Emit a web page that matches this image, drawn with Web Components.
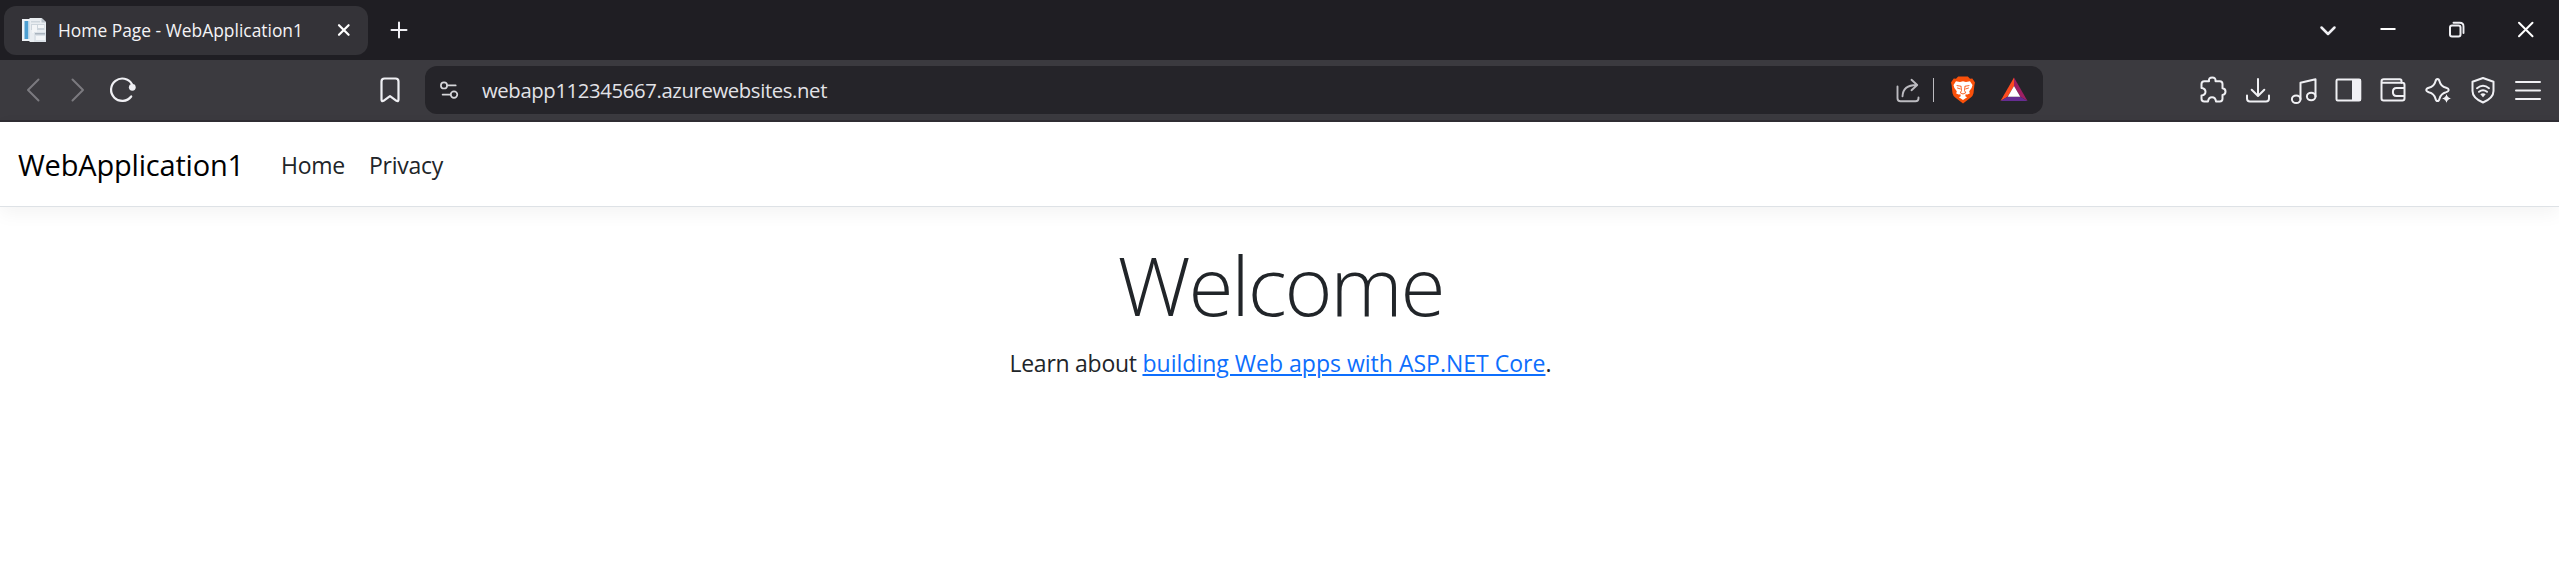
<!DOCTYPE html>
<html lang="en"><head><meta charset="utf-8"><title>Home Page - WebApplication1</title>
<style>
html,body{margin:0;height:100%;overflow:hidden;background:#fff;font-family:"Open Sans","Noto Sans",sans-serif}
</style></head><body>
<app-window></app-window>
<script>
const define=(name,html,init)=>customElements.define(name,class extends HTMLElement{
  constructor(){super();this.attachShadow({mode:'open'});}
  connectedCallback(){this.shadowRoot.innerHTML=typeof html==='function'?html(this):html;if(init)init(this);}
});

// Text whose tracking is adjusted so that it takes up the given width.
define('fit-text','<style>:host{display:inline-block;white-space:pre}span{display:inline-block}</style><span><slot></slot></span>',el=>{
  const s=el.shadowRoot.querySelector('span'),w=+el.getAttribute('width');
  s.style.letterSpacing=(w-s.getBoundingClientRect().width)/el.textContent.length+'px';
});

const ICONS={
 back:'<path d="M21.5 5.5 11 16 21.5 26.5" stroke="#7b7a7f"/>',
 forward:'<path d="M10.5 5.5 21 16 10.5 26.5" stroke="#7b7a7f"/>',
 reload:'<path d="M24.2 22.5A11.2 11.2 0 1 1 25 10.2" stroke-width="2.2"/><circle cx="25.3" cy="13.3" r="3.4" fill="#f0f0f4" stroke="none"/>',
 bookmark:'<path d="M7.5 7.5q0-3 3-3h11q3 0 3 3v18q0 2.4-2 1.3L16 22.2l-6.500 4.600q-2 1.100-2-1.300z" stroke-width="2.200"/>',
 tune:'<g stroke="#d6d6da" stroke-width="1.700"><circle cx="11" cy="11.400" r="3.100"/><path d="M14.300 11.400h8.400M9.600 20.600h8"/><circle cx="21" cy="20.600" r="3.300"/></g>',
 share:'<g stroke="#bcbbc0" stroke-width="1.900"><path d="M5.500 12.500v11.700q0 3 3 3h15q3 0 3-3v-.700M10.500 22.300q.500-11.300 14-11.300M19.500 5.800l5.700 5.200-5.700 5.200"/></g>',
 brave:'<path d="M11.200 2.500h9.600l2.200 2.200 2.300-.300 2.700 4.200-.600 2.300-.900 8.300q-.500 2.500-2.700 4.300L16 29.500l-7.800-6q-2.200-1.800-2.700-4.300l-.900-8.300L4 8.600l2.700-4.200 2.300.300z" fill="#f9500a" stroke="none"/><path d="M9 7.300l4 .600 3-.700 3 .700 4-.600 2.500 3.800-.900 3-2.400 3.200.600 2.300-2.500.800-1.700-.200-.300 2.100 1.800.900L16 26l-4.100-2.800 1.800-.900-.300-2.100-1.700.200-2.500-.800.600-2.300-2.400-3.200-.900-3z" fill="#fff" stroke="none"/><path d="M10 11.600l3.800.600M22 11.600l-3.800.600M14 12.500l.500 4-1.200 2.300 2.700 1.200 2.700-1.200-1.200-2.300.500-4M10.500 14l2.700.900M21.500 14l-2.700.900" stroke="#f9500a" stroke-width=".900"/>',
 bat:'<g stroke="none"><path d="M16 3.500 2.500 27 9.500 22.800 16 12z" fill="#ff4c20"/><path d="M16 3.500 29.500 27 22.500 22.800 16 12z" fill="#9e1f63"/><path d="M2.500 27h27l-7-4.300h-13z" fill="#662d91"/><path d="M16 12 9.700 22.700h12.600z" fill="#fff"/></g>',
 puzzle:'<path d="M4.500 10q0-2.800 2.800-2.800h4.700q-.500-3.700 3.200-3.700t3.300 3.700h4.300q2.700 0 2.700 2.800v4.200q3 .300 3 3.400t-3 3.500v3.700q0 2.700-2.700 2.700h-3.800q-.500-4.300-4-4.300t-4 4.300H7.300q-2.800 0-2.800-2.800v-3.200q4-.600 4-3.800t-4-3.800z"/>',
 download:'<path d="M16 5v16.500M9.700 15.800l6.300 6.200 6.300-6.200M5 21.500v3q0 3 3 3h16q3 0 3-3v-3"/>',
 music:'<ellipse cx="9.200" cy="25.200" rx="4.300" ry="3.800"/><ellipse cx="24.200" cy="22.500" rx="4.300" ry="3.800"/><path d="M13.500 25V8.700L28.500 5.200v17.300"/>',
 sidebar:'<rect x="4.500" y="5.500" width="23.800" height="21" rx="1.200"/><path d="M21 6h7v20h-7z" fill="#f0f0f4"/>',
 wallet:'<path d="M24.500 9V7q0-1.700-1.700-1.700H6.800Q4.500 5.300 4.500 7.500v16.800q0 2.200 2.200 2.200h18.600q2.200 0 2.200-2.200V11q0-2.200-2.200-2.200H6.500q-2 0-2-1.500M27.500 14h-8q-3.600 0-3.600 4t3.600 4h8"/>',
 sparkle:'<path d="M15.500 5q1.500 0 2 2.300 1.200 5 6.700 6.500 2.500.800 2.500 2.200t-2.500 2.200q-5.500 1.500-6.700 6.500-.500 2.300-2 2.300t-2-2.300q-1.200-5-6.700-6.500Q4.300 17.400 4.300 16t2.500-2.200q5.500-1.500 6.700-6.500Q14 5 15.500 5z"/><path d="M24.500 19.500q.800 4 5 5-4.200 1-5 5-.800-4-5-5 4.200-1 5-5z" fill="#f0f0f4" stroke="#3b3a3f" stroke-width=".800"/>',
 shield:'<path d="M16 4 26.500 7.800V17q0 7-10.500 11.500Q5.500 24 5.500 17V7.800z"/><path d="M10 14.200q6-4.800 12 0M12 17.800q4-3.200 8 0"/><path d="M13.300 20.300q2.700-2.200 5.400 0L16 23.200z" fill="#f0f0f4" stroke="none"/>',
 menu:'<path d="M4 8h24M4 16.500h24M4 25h24"/>',
 x:'<path d="M11 11.200l9.600 9.600M20.600 11.200 11 20.800" stroke="#fff" stroke-width="2.200"/>',
 plus:'<path d="M8.500 16h15M16 8.500v15"/>',
 caret:'<path d="M9.500 13.500l6.500 6.500 6.500-6.500" stroke-width="2.500"/>',
 min:'<path d="M8.500 15h15" stroke="#fff" stroke-linecap="butt"/>',
 restore:'<rect x="9" y="11.500" width="10.500" height="11" rx="2"/><path d="M12.500 8.800h6.300q3.700 0 3.700 3.700v6.500" stroke-width="1.900"/>',
 close:'<path d="M9 8.700l13.500 13.500M22.500 8.700 9 22.200" stroke="#fff"/>',
 page:'<g stroke="none"><path d="M4 5h16v22H4z" fill="#eef2f6"/><path d="M6.500 7h4v18h-4z" fill="#4c9fd2"/><path d="M10 7h2v18h-2z" fill="#b9d6ea"/><path d="M11.500 4h12.200l4.300 4v20H11.500z" fill="#e9edf1"/><path d="M23.500 4v4.500H28z" fill="#b8c0c8"/><path d="M13 7h9v1.500h-9zM13 10h13.500v6H13z" fill="#cdd5dc"/><path d="M14 11h5v8h-5zM20 11h6v3h-6z" fill="#f3f5f7"/><path d="M16 18h12v10H16z" fill="#dce2e8"/><path d="M17 19h10v1.500H17z" fill="#aab4be"/><path d="M18 22h9v4h-9z" fill="#f3f5f7"/></g>'
};
define('ui-icon',el=>`<style>:host{display:block;width:32px;height:32px;flex:none}svg{display:block}</style><svg width="32" height="32" viewBox="0 0 32 32" fill="none" stroke="#f0f0f4" stroke-width="2" stroke-linecap="round" stroke-linejoin="round">${ICONS[el.getAttribute('name')]}</svg>`);

define('tab-strip',`<style>
:host{display:flex;height:60px;background:#1f1e23;align-items:center;padding-left:4px;box-sizing:border-box}
.tab{display:flex;align-items:center;width:364px;height:49px;background:#343338;border-radius:12px;padding:0 8.500px 0 14px;box-sizing:border-box;color:#f4f4f6;font-size:17.400px;line-height:24px}
fit-text{margin-left:8px;flex:1}
.plus{margin-left:15px}
.win{display:flex;margin-left:auto;padding-right:17px}
.win :nth-child(2){margin-left:28px}.win :nth-child(3){margin-left:37px}.win :nth-child(4){margin-left:37px}
</style>
<div class="tab"><ui-icon name="page"></ui-icon><fit-text width="245">Home Page - WebApplication1</fit-text><ui-icon name="x"></ui-icon></div>
<ui-icon class="plus" name="plus"></ui-icon>
<div class="win"><ui-icon name="caret"></ui-icon><ui-icon name="min"></ui-icon><ui-icon name="restore"></ui-icon><ui-icon name="close"></ui-icon></div>`);

define('address-bar',`<style>
:host{display:flex;align-items:center;box-sizing:border-box;width:1618px;height:48px;border-radius:12px;background:#252429;padding:0 13.500px 0 8px;color:#e2e2e7;font-size:20.300px;line-height:28px}
fit-text{margin-left:17px;flex:1}
i{width:1px;height:24px;background:#bcbbc0;margin:0 13.500px 0 8.500px}
.bat{margin-left:18.500px}
</style><ui-icon name="tune"></ui-icon><fit-text width="345">webapp112345667.azurewebsites.net</fit-text><ui-icon name="share"></ui-icon><i></i><ui-icon name="brave"></ui-icon><ui-icon class="bat" name="bat"></ui-icon>`);

define('tool-bar',`<style>
:host{display:flex;align-items:center;box-sizing:border-box;height:62px;background:#3b3a3f;border-bottom:2px solid #302e34;padding:0 15px 0 17px}
.nav,.ext{display:flex;gap:13px}.mark{margin-left:235px}address-bar{margin-left:19px}.ext{margin-left:auto}
</style><div class="nav"><ui-icon name="back"></ui-icon><ui-icon name="forward"></ui-icon><ui-icon name="reload"></ui-icon></div>
<ui-icon class="mark" name="bookmark"></ui-icon><address-bar></address-bar>
<div class="ext">${['puzzle','download','music','sidebar','wallet','sparkle','shield','menu'].map(n=>`<ui-icon name="${n}"></ui-icon>`).join('')}</div>`);

define('site-nav',`<style>
:host{display:flex;align-items:flex-start;box-sizing:border-box;height:85px;padding:22.500px 18px 0;border-bottom:1px solid #dee2e6;box-shadow:0 6px 18px rgba(0,0,0,.05);font-size:23px;line-height:41px;color:#212529}
.brand{font-size:29px;line-height:40px;color:#000}
.home{margin-left:37px}.privacy{margin-left:24px}
</style><fit-text class="brand" width="226">WebApplication1</fit-text><fit-text class="home" width="64">Home</fit-text><fit-text class="privacy" width="74">Privacy</fit-text>`);

define('welcome-panel',`<style>
:host{display:flex;flex-direction:column;align-items:center;padding:27px 0 0 2px;color:#212529}
h1{margin:0;font-size:82px;font-weight:300;line-height:100px}
p{margin:11px 0 0;font-size:23px;line-height:36px;display:flex}
a{color:#0d6efd;text-decoration:none}
</style><h1><fit-text width="326">Welcome</fit-text></h1><p><fit-text width="133">Learn about </fit-text><a href="#"><fit-text class="l" width="403">building Web apps with ASP.NET Core</fit-text></a><span>.</span></p>`,el=>{
  // Inline-block text does not inherit the anchor's underline.
  const l=el.shadowRoot.querySelector('.l');
  l.style.cssText='text-decoration:underline 2px;text-underline-offset:2px';
  l.shadowRoot.querySelector('span').style.cssText+=';display:inline';
});

define('app-window','<style>:host{display:block}</style><tab-strip></tab-strip><tool-bar></tool-bar><site-nav></site-nav><welcome-panel></welcome-panel>');
</script></body></html>
